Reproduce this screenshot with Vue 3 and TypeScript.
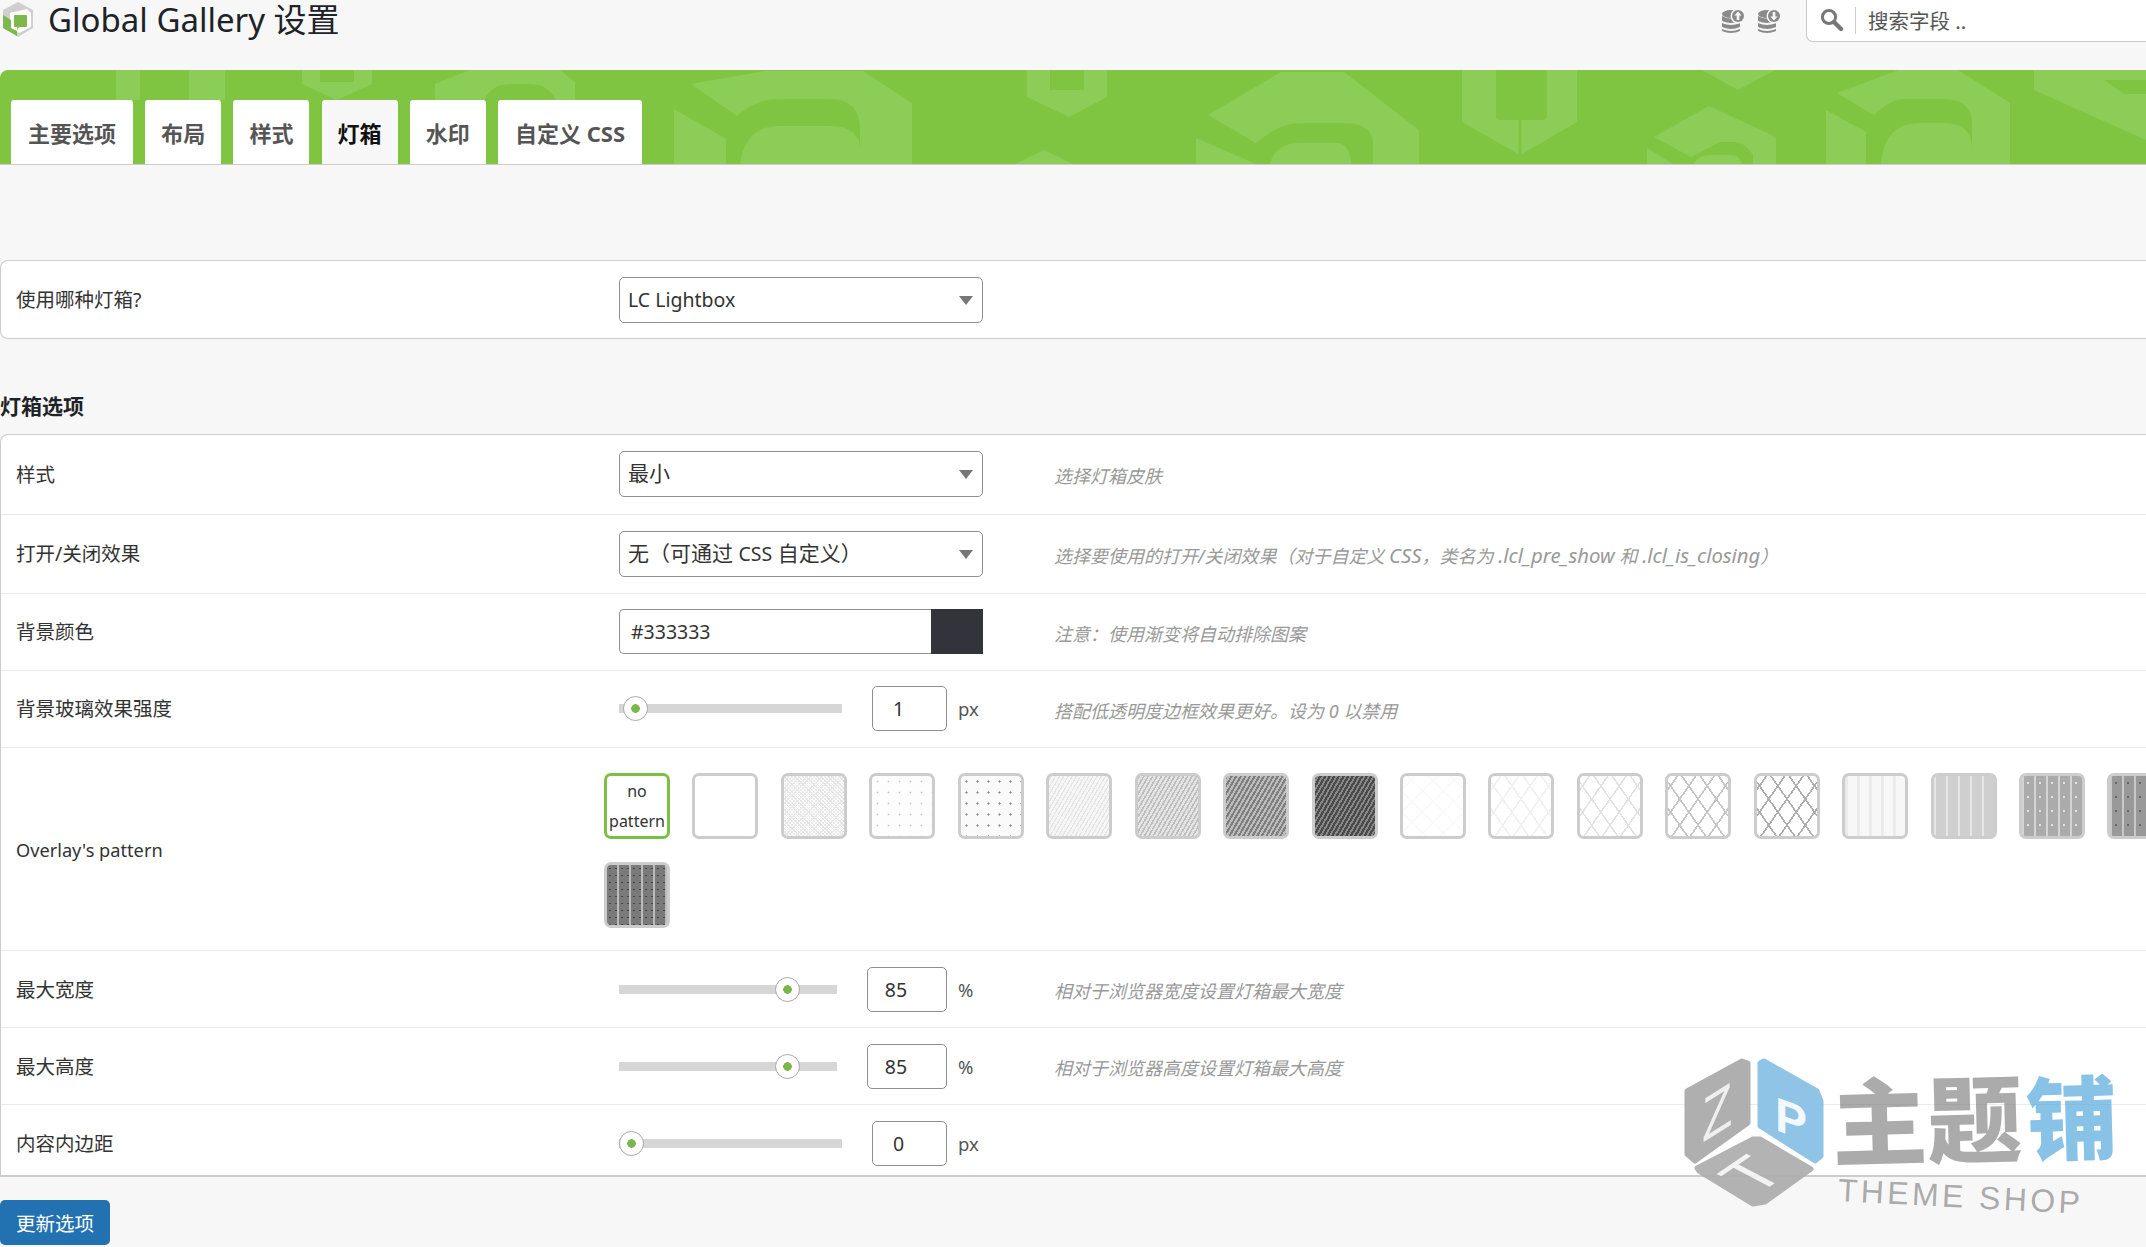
<script setup lang="ts">
const tabs = ['主要选项', '布局', '样式', '灯箱', '水印', '自定义 CSS']
const patterns = Array.from({ length: 18 }, (_, i) => 'p' + (i + 1))

interface Slider {
  label: string
  value: string
  unit: string
  thumb: number
  wide: boolean
  hint: string
}
const blur: Slider = { label: '背景玻璃效果强度', value: '1', unit: 'px', thumb: 4, wide: true, hint: '搭配低透明度边框效果更好。设为 0 以禁用' }
const sliders: Slider[] = [
  { label: '最大宽度', value: '85', unit: '%', thumb: 155.5, wide: false, hint: '相对于浏览器宽度设置灯箱最大宽度' },
  { label: '最大高度', value: '85', unit: '%', thumb: 155.5, wide: false, hint: '相对于浏览器高度设置灯箱最大高度' },
  { label: '内容内边距', value: '0', unit: 'px', thumb: 0, wide: true, hint: '' }
]
</script>

<template>
  <div class="viewport">
    <div class="page">
      <header class="top">
        <svg class="logo" width="38" height="40" viewBox="0 0 38 40">
          <polygon points="18,2 33,10 33,28 18,37 3,28 3,10" fill="#cfcfcf" />
          <polygon points="10,13 27,9 31,13 31,27 19,33 10,28" fill="#fff" />
          <polygon points="3,15 11,20 11,28 17,31 17,36 12,33 3,28" fill="#7cb84a" />
          <path d="M14 16 q0 -1 1 -1 h11 q1 0 1 1 v10 q0 1 -1 1 h-7 l-2 3 v-3 h-2 q-1 0 -1 -1 z" fill="#7cb84a" />
        </svg>
        <h1 class="title">Global Gallery 设置</h1>
        <svg class="db first" width="24" height="25" viewBox="0 0 24 25">
          <ellipse cx="9" cy="5" rx="9" ry="4" fill="#8a8a8a" />
          <path d="M0 7 q9 5 18 0 v5 q-9 4 -18 0 z M0 14 q9 4 18 0 v4 q-9 4 -18 0 z M0 20 q9 4 18 0 v2 q-9 4 -18 0 z" fill="#8a8a8a" />
          <circle cx="16" cy="7" r="7.5" fill="#f7f7f7" />
          <circle cx="16" cy="7" r="6" fill="#8a8a8a" />
          <path d="M16 2.5 l3.6 4 h-2.3 v4.5 h-2.6 v-4.5 h-2.3 z" fill="#f7f7f7" />
        </svg>
        <svg class="db" width="24" height="25" viewBox="0 0 24 25">
          <ellipse cx="9" cy="5" rx="9" ry="4" fill="#8a8a8a" />
          <path d="M0 7 q9 5 18 0 v5 q-9 4 -18 0 z M0 14 q9 4 18 0 v4 q-9 4 -18 0 z M0 20 q9 4 18 0 v2 q-9 4 -18 0 z" fill="#8a8a8a" />
          <circle cx="16" cy="7" r="7.5" fill="#f7f7f7" />
          <circle cx="16" cy="7" r="6" fill="#8a8a8a" />
          <path d="M16 11.5 l-3.6 -4 h2.3 v-4.5 h2.6 v4.5 h2.3 z" fill="#f7f7f7" />
        </svg>
        <div class="search">
          <svg class="search-ico" width="24" height="24" viewBox="0 0 24 24">
            <circle cx="9" cy="9" r="6.6" fill="none" stroke="#777" stroke-width="3" />
            <path d="M14 14 L21 21" stroke="#777" stroke-width="4.4" stroke-linecap="round" />
          </svg>
          <span class="search-sep"></span>
          <input class="search-input" placeholder="搜索字段 .." />
        </div>
      </header>

      <nav class="bar">
        <svg class="bar-art" width="2146" height="94" viewBox="0 0 2146 94">
          <g fill="#8ccd57">
            <path d="M116 0h24v30h-24zM189 0h36v30h-36z" />
            <path d="M302 0h70v14l-35 16-35-16z" />
            <path d="M435 14 470 0h90l15 12v18H556Q548 14 530 14h-20Q492 14 484 30h-49z" />
            <path d="M691 14 765 1h98l49 32v61h-52V60Q860 29 830 29h-50Q755 29 737 46z" />
            <path d="M674 39 726 69v25h-52z" />
            <path d="M740 94Q745 56 780 56h50Q860 56 860 80v14z" />
            <path d="M1027 0h80v27l-38 20-42-20z" />
            <path d="M1044 80 1073 94h-58z" />
            <path d="M1208 45 1281 2h63l75 58v34h-46V75Q1373 53 1345 53h-45Q1280 53 1256 73z" />
            <path d="M1196 68 1256 94h-60z" />
            <path d="M1270 94Q1275 73 1300 73h35Q1351 73 1351 94z" />
            <path d="M1462 0h115v52l-57 33-58-33z" />
            <path d="M1702 0h73l-37 20z" />
            <path d="M1709 36 1776 67v27h-23V85Q1745 72 1735 72h-15l-29 15-37-20z" />
            <path d="M1647 78 1673 94h-26z" />
            <path d="M1694 94Q1698 85 1710 85h20Q1740 85 1742 94z" />
            <path d="M1837 23 1899 0h59l52 33v61h-38V55Q1972 29 1945 29h-40Q1890 29 1874 45z" />
            <path d="M1826 40 1866 62v32h-40z" />
            <path d="M1881 94Q1884 53 1920 53h25Q1972 53 1972 80v14z" />
            <path d="M2034 0h112v70l-112-50z" />
          </g>
          <g fill="#80c541">
            <path d="M320 0h34v12h-34z" />
            <path d="M1050 0h34v20h-34z" />
            <path d="M1496 0h51v46q0 4-4 4h-43q-4 0-4-4z" />
            <path d="M1518.5 50h3v35h-3z" />
            <path d="M2104 10h42v14h-22z" />
          </g>
        </svg>
        <a v-for="t in tabs" :key="t" class="tab" :class="{ active: t === '灯箱' }">{{ t }}</a>
      </nav>

      <main class="content">
        <section class="card first-card">
          <div class="row row-first">
            <div class="label">使用哪种灯箱?</div>
            <div class="control">
              <div class="select latin">LC Lightbox</div>
            </div>
          </div>
        </section>

        <h3 class="section-title">灯箱选项</h3>

        <section class="card">
          <div class="row row-select">
            <div class="label">样式</div>
            <div class="control"><div class="select">最小</div></div>
            <div class="hint">选择灯箱皮肤</div>
          </div>
          <div class="row row-select">
            <div class="label">打开/关闭效果</div>
            <div class="control"><div class="select">无（可通过 <span class="small">CSS</span> 自定义）</div></div>
            <div class="hint">选择要使用的打开/关闭效果（对于自定义 <span class="lat">CSS</span>，类名为 <span class="lat">.lcl_pre_show</span> 和 <span class="lat">.lcl_is_closing</span>）</div>
          </div>
          <div class="row row-slim">
            <div class="label raised">背景颜色</div>
            <div class="control raised">
              <div class="color">
                <input class="color-input" value="#333333" readonly />
                <span class="color-swatch"></span>
              </div>
            </div>
            <div class="hint">注意：使用渐变将自动排除图案</div>
          </div>
          <div class="row row-slim">
            <div class="label raised">{{ blur.label }}</div>
            <div class="control slider-ctl raised">
              <div class="track wide">
                <span class="thumb" :style="{ left: blur.thumb + 'px' }"></span>
              </div>
              <input class="num narrow" :value="blur.value" readonly />
              <span class="unit">{{ blur.unit }}</span>
            </div>
            <div class="hint">{{ blur.hint }}</div>
          </div>
          <div class="row row-pattern">
            <div class="label latin-label">Overlay's pattern</div>
            <div class="patterns">
              <div class="swatch selected">no<br />pattern</div>
              <div v-for="p in patterns" :key="p" class="swatch" :class="p"></div>
            </div>
          </div>
          <div v-for="s in sliders" :key="s.label" class="row row-slim">
            <div class="label">{{ s.label }}</div>
            <div class="control slider-ctl">
              <div class="track" :class="{ wide: s.wide }">
                <span class="thumb" :style="{ left: s.thumb + 'px' }"></span>
              </div>
              <input class="num" :class="{ narrow: s.wide }" :value="s.value" readonly />
              <span class="unit">{{ s.unit }}</span>
            </div>
            <div v-if="s.hint" class="hint">{{ s.hint }}</div>
          </div>
        </section>
      </main>
    </div>

    <footer class="footer">
      <button class="save">更新选项</button>
    </footer>

    <div class="watermark">
      <svg class="wm-logo" width="142" height="152" viewBox="0 0 142 152">
        <g stroke-width="5" stroke-linejoin="round">
          <polygon points="3,34 58,4 64,6 64,66 11,104 3,97" fill="#a9a9a9" stroke="#a9a9a9" />
          <polygon points="76,6 80,4 133,34 137,44 137,99 131,104 76,69" fill="#86c0e4" stroke="#86c0e4" />
          <polygon points="69,82 76,82 127,112 81,145 69,147 15,114 13,111" fill="#adadad" stroke="#adadad" />
        </g>
        <text class="wm-letter" transform="matrix(.8 -.5 0 1 18 86)" fill="#eee">Z</text>
        <text class="wm-letter p" transform="matrix(1 .35 0 1 91 73)" fill="#f2f8fc">P</text>
        <text class="wm-letter t" transform="matrix(1.31 -.9 1.47 .77 72 139)" fill="#f2f2f2">T</text>
      </svg>
      <div class="wm-text">
        <div class="wm-cn"><span class="wm-grey">主题</span><span class="wm-blue">铺</span></div>
        <div class="wm-en">THEME SHOP</div>
      </div>
    </div>
  </div>
</template>

<style>
html, body { margin: 0; background: #f7f7f7; overflow: hidden; }
</style>

<style scoped>
.viewport {
  position: relative;
  width: 100vw;
  height: 100vh;
  overflow: hidden;
  background: #f7f7f7;
  font-family: "Noto Sans", "Noto Sans CJK SC", sans-serif;
  color: #333;
}
.page { width: 2260px; }

.top {
  width: 2146px;
  height: 70px;
  display: flex;
  align-items: flex-start;
  box-sizing: border-box;
}
.logo { flex: none; margin-right: 10px; }
.title {
  margin: 0;
  font-size: 33px;
  line-height: 40px;
  font-weight: 400;
  color: #1d2327;
  white-space: nowrap;
}
.db { flex: none; margin-top: 9px; margin-left: 12px; }
.db.first { margin-left: auto; }
.search {
  flex: none;
  margin-left: 24px;
  width: 340px;
  height: 43px;
  margin-top: -1px;
  box-sizing: border-box;
  background: #fff;
  border: 1px solid #c8c8c8;
  border-top: 0;
  border-right: 0;
  border-radius: 0 0 0 7px;
  display: flex;
  align-items: center;
}
.search-ico { margin-left: 13px; flex: none; }
.search-sep { width: 1px; height: 27px; background: #ccc; margin-left: 11px; flex: none; }
.search-input {
  border: 0;
  outline: 0;
  background: transparent;
  font: inherit;
  font-size: 20.5px;
  margin: 2px 0 0 12px;
  padding: 0;
  flex: 1;
  min-width: 0;
  color: #555;
}
.search-input::placeholder { color: #555; opacity: 1; }

.bar {
  position: relative;
  height: 95px;
  box-sizing: border-box;
  background: #80c541;
  border-bottom: 1px solid #ccc;
  border-radius: 8px 0 0 0;
  padding: 30px 0 0 11px;
  display: flex;
  gap: 12.2px;
  align-items: flex-start;
  overflow: hidden;
}
.bar-art { position: absolute; left: 0; top: 0; }
.tab {
  position: relative;
  height: 65px;
  box-sizing: border-box;
  padding: 0 16px;
  background: #fff;
  border-radius: 3px 3px 0 0;
  font-size: 22px;
  font-weight: 700;
  line-height: 66px;
  color: #555;
  white-space: nowrap;
}
.tab:first-of-type { padding: 0 17px; }
.tab:last-of-type { padding: 0 17px; }
.tab.active { background: #f7f7f7; color: #111; }

.content { padding-top: 95px; }
.card {
  background: #fff;
  border: 1px solid #ccc;
  border-right: 0;
  border-radius: 8px 0 0 8px;
  overflow: hidden;
}
.section-title {
  margin: 51.5px 0 13.5px;
  font-size: 21px;
  line-height: 30px;
  font-weight: 700;
  color: #1d2327;
}
.row {
  display: grid;
  grid-template-columns: 618px 435px 1fr;
  align-items: center;
  box-sizing: border-box;
  border-bottom: 1px solid #ebebeb;
}
.row:last-child { border-bottom: 0; }
.row-first { height: 77px; }
.row-select { height: 79.5px; }
.row-slim { height: 77px; }
.row-pattern { height: 203px; }
.label {
  padding: 1px 0 0 15px;
  font-size: 19.5px;
  line-height: 28px;
  color: #333;
}
.latin-label { font-size: 18.2px; }
.control { display: flex; align-items: center; }
.raised { margin-top: -2px; }
.select {
  position: relative;
  width: 364px;
  height: 46px;
  box-sizing: border-box;
  border: 1px solid #8c8f94;
  border-radius: 5px;
  background: #fff;
  padding-left: 8px;
  font-size: 21px;
  line-height: 43px;
  color: #333;
  white-space: nowrap;
}
.select.latin { font-size: 19.5px; }
.select .small { font-size: 19.5px; }
.select::after {
  content: "";
  position: absolute;
  right: 9px;
  top: 18px;
  border-left: 7px solid transparent;
  border-right: 7px solid transparent;
  border-top: 9px solid #777;
}
.hint {
  font-size: 18px;
  line-height: 26px;
  font-style: italic;
  color: #999;
  white-space: nowrap;
  transform: translateY(1.5px);
}
.hint .lat { font-size: 20.3px; }
.color {
  display: flex;
  width: 364px;
  height: 45px;
  box-sizing: border-box;
  border: 1px solid #8c8f94;
  border-right: 0;
  border-radius: 5px 0 0 5px;
  background: #fff;
}
.color-input {
  flex: 1;
  min-width: 0;
  border: 0;
  outline: 0;
  background: transparent;
  padding: 0 0 0 11px;
  font: inherit;
  font-size: 19.5px;
  color: #333;
}
.color-swatch { width: 52px; margin: -1px 0; background: #33333b; flex: none; }

.slider-ctl { position: relative; }
.track {
  position: relative;
  width: 218px;
  height: 9px;
  margin-right: 30px;
  background: #d6d6d6;
}
.track.wide { width: 223px; }
.thumb {
  position: absolute;
  top: -8px;
  width: 25px;
  height: 25px;
  box-sizing: border-box;
  border: 1px solid #aaa;
  border-radius: 50%;
  background: radial-gradient(circle, #7ab648 0 4px, #fff 4.6px);
}
.num {
  width: 80px;
  height: 45px;
  box-sizing: border-box;
  border: 1px solid #8c8f94;
  border-radius: 5px;
  background: #fff;
  outline: 0;
  padding: 0 22px 0 0;
  text-align: center;
  font: inherit;
  font-size: 19.5px;
  color: #333;
}
.num.narrow { width: 75px; }
.unit { margin-left: 11px; font-size: 18.5px; color: #555; }

.patterns {
  grid-column: 2 / 4;
  margin: 3px 0 0 -15px;
  display: flex;
  flex-wrap: wrap;
  gap: 23px 22.45px;
  padding-right: 20px;
}
.swatch {
  width: 66px;
  height: 66px;
  box-sizing: border-box;
  border: 3px solid #ccc;
  border-radius: 7px;
  background-color: #fff;
  font-size: 16px;
  line-height: 30px;
  text-align: center;
  color: #333;
  overflow: hidden;
}
.swatch.selected { border-color: #7cc043; }

.p2 {
  background-image: repeating-linear-gradient(45deg, #e6e6e6 0 1px, transparent 1px 2.6px), repeating-linear-gradient(-45deg, #ebebeb 0 1px, transparent 1px 2.6px);
}
.p3 { background-image: radial-gradient(circle, #c4c4c4 0 .8px, transparent 1.1px); background-size: 11px 11px; background-color: #fdfdfd; }
.p4 { background-image: radial-gradient(circle, #888 0 .9px, transparent 1.2px); background-size: 11px 11px; background-color: #fafafa; }
.p5 { background-image: repeating-linear-gradient(-60deg, #e4e4e4 0 1.2px, #f6f6f6 1.2px 3.6px); }
.p6 { background-image: repeating-linear-gradient(-60deg, #bebebe 0 1.6px, #e4e4e4 1.6px 3.8px); }
.p7 { background-image: repeating-linear-gradient(-60deg, #7e7e7e 0 2px, #bdbdbd 2px 4px); }
.p8 { background-image: repeating-linear-gradient(-60deg, #4a4a4a 0 2.2px, #888 2.2px 4px); }
.p9 { background-image: repeating-linear-gradient(45deg, #f9f9f9 0 1.5px, transparent 1.5px 15px), repeating-linear-gradient(-45deg, #f9f9f9 0 1.5px, transparent 1.5px 15px); }
.p10 { background-image: repeating-linear-gradient(55deg, #f0f0f0 0 1.5px, transparent 1.5px 15px), repeating-linear-gradient(-55deg, #f0f0f0 0 1.5px, transparent 1.5px 15px); }
.p11 { background-image: repeating-linear-gradient(55deg, #e2e2e2 0 1.5px, transparent 1.5px 15px), repeating-linear-gradient(-55deg, #e2e2e2 0 1.5px, transparent 1.5px 15px); }
.p12 { background-image: repeating-linear-gradient(55deg, #c6c6c6 0 1.6px, transparent 1.6px 15px), repeating-linear-gradient(-55deg, #c6c6c6 0 1.6px, transparent 1.6px 15px); }
.p13 { background-image: repeating-linear-gradient(55deg, #aeaeae 0 1.6px, transparent 1.6px 15px), repeating-linear-gradient(-55deg, #aeaeae 0 1.6px, transparent 1.6px 15px); }
.p14 { background-image: repeating-linear-gradient(90deg, #ebebeb 0 3px, #f7f7f7 3px 12px); }
.p15 { background-image: repeating-linear-gradient(90deg, #e6e6e6 0 2px, #cfcfcf 2px 12px); }
.p16 { background-image: radial-gradient(circle, #e4e4e4 0 .7px, transparent 1px), repeating-linear-gradient(90deg, #d4d4d4 0 2px, #ababab 2px 12px); background-size: 12px 14px, auto; }
.p17 { background-image: radial-gradient(circle, #666 0 .7px, transparent 1px), repeating-linear-gradient(90deg, #c8c8c8 0 2px, #999 2px 12px); background-size: 12px 14px, auto; }
.p18 { background-image: radial-gradient(circle, #444 0 .7px, transparent 1px), repeating-linear-gradient(90deg, #7a7a7a 0 10px, #bbb 10px 12px); background-size: 6px 7px, auto; }

.footer {
  position: absolute;
  left: 0;
  right: 0;
  bottom: 0;
  height: 72px;
  background: #f7f7f7;
  border-top: 2px solid #ccc;
  box-sizing: border-box;
}
.save {
  position: absolute;
  left: 0;
  top: 23px;
  width: 110px;
  height: 45px;
  border: 0;
  border-radius: 5px;
  background: #2271b1;
  color: #fff;
  font: inherit;
  font-size: 19.5px;
  padding: 0;
}

.watermark {
  position: absolute;
  left: 1684px;
  top: 1057px;
  display: flex;
  pointer-events: none;
}
.wm-logo { flex: none; overflow: visible; opacity: .92; }
.wm-letter { font-family: "Liberation Sans", sans-serif; font-size: 62px; }
.wm-letter.p { font-size: 48px; font-weight: 700; }
.wm-letter.t { font-size: 40px; }
.wm-text { margin-left: 6px; }
.wm-cn {
  font-family: "Noto Sans CJK SC", sans-serif;
  font-weight: 900;
  font-size: 95px;
  line-height: 116px;
  padding-top: 3px;
  white-space: nowrap;
  transform: rotate(-1.5deg);
  transform-origin: left center;
}
.wm-grey { color: rgba(120, 120, 120, .62); }
.wm-blue { color: rgba(90, 170, 220, .72); margin-left: 4px; font-size: 91px; }
.wm-en {
  font-family: "Liberation Sans", sans-serif;
  font-size: 32px;
  line-height: 36px;
  letter-spacing: 3.4px;
  color: rgba(120, 120, 120, .62);
  margin: -5px 0 0 6px;
  white-space: nowrap;
  transform: rotate(3deg);
  transform-origin: left center;
}
</style>
